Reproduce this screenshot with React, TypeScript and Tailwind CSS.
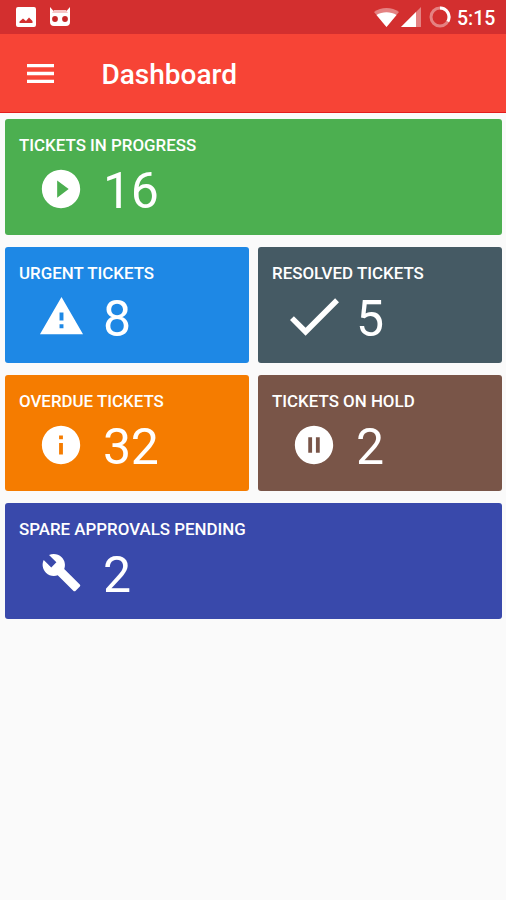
import React from 'react';
import clsx from 'clsx';
import { MdBuild, MdInfo, MdPauseCircleFilled, MdPlayCircleFilled, MdWarning } from 'react-icons/md';

interface Tile {
  label: string;
  count: number;
  icon: React.ReactNode;
  color: string;
  wide?: boolean;
}

const CheckIcon = () => (
  <svg viewBox="3.4 5.6 17.6 13.4" className="h-[38px] w-[49px] shrink-0" fill="currentColor">
    <path d="M9 16.2 4.8 12l-1.4 1.4L9 19 21 7l-1.4-1.4z" />
  </svg>
);

const TILES: Tile[] = [
  {
    label: 'TICKETS IN PROGRESS',
    count: 16,
    icon: <MdPlayCircleFilled className="size-[46px]" />,
    color: 'bg-[#4caf50]',
    wide: true,
  },
  { label: 'URGENT TICKETS', count: 8, icon: <MdWarning className="size-[47px]" />, color: 'bg-[#1e88e5]' },
  { label: 'RESOLVED TICKETS', count: 5, icon: <CheckIcon />, color: 'bg-[#455a64]' },
  { label: 'OVERDUE TICKETS', count: 32, icon: <MdInfo className="size-[46px]" />, color: 'bg-[#f57c00]' },
  {
    label: 'TICKETS ON HOLD',
    count: 2,
    icon: <MdPauseCircleFilled className="size-[46px]" />,
    color: 'bg-[#795548]',
  },
  {
    label: 'SPARE APPROVALS PENDING',
    count: 2,
    icon: <MdBuild className="size-[41px]" />,
    color: 'bg-[#3949ab]',
    wide: true,
  },
];

const StatusBar = () => (
  <div className="flex h-[34px] items-center bg-[#d32f2f] pr-[10px] pl-4">
    <svg viewBox="0 0 20 20" className="size-5" fill="#fff">
      <path
        fillRule="evenodd"
        d="M2 0h16a2 2 0 0 1 2 2v16a2 2 0 0 1-2 2H2a2 2 0 0 1-2-2V2a2 2 0 0 1 2-2zM3.5 16h13v-2L13 10.5l-3 3.500-3-2.500L3.500 14.500z"
      />
    </svg>
    <svg viewBox="0 0 22 20" className="ml-[13px] h-5 w-[22px]">
      <path fill="#fff" d="M1 0l3.500 4h13L21 0v15a4 4 0 0 1-4 4H5a4 4 0 0 1-4-4z" />
      <path fill="#f6c6c6" d="M5 3h12l2 3H3z" />
      <circle cx="6" cy="12" r="2.9" fill="#c62828" />
      <circle cx="16" cy="12" r="2.9" fill="#c62828" />
    </svg>
    <svg viewBox="0 0 25 19" className="ml-auto h-[19px] w-[25px]" fill="#fff">
      <path fillOpacity=".4" d="M0 4C7-1.3 18-1.3 25 4L12.5 19z" />
      <path d="M2.5 7C8 3.2 17 3.2 22.5 7l-10 12z" />
    </svg>
    <svg viewBox="0 0 20 20" className="ml-[2px] size-5" fill="#fff">
      <path fillOpacity=".4" d="M20 0v20H0z" />
      <path d="M15 5v15H0z" />
    </svg>
    <svg viewBox="0 0 22 22" className="ml-2 size-[22px]" fill="none" strokeWidth="3">
      <circle cx="11" cy="11" r="9" stroke="#fff" strokeOpacity=".4" />
      <path d="M11 2a9 9 0 0 1 7.8 13.5" stroke="#fff" />
    </svg>
    <span className="ml-[6px] w-[39px] pt-[3px] text-[19.5px] leading-none font-medium whitespace-nowrap">5:15</span>
  </div>
);

const StatTile: React.FC<Tile> = ({ label, count, icon, color, wide }) => (
  <div className={clsx('h-[116px] rounded-[3px] pt-4 pl-[14px]', color, wide && 'col-span-2')}>
    <h2 className="text-[16.9px] leading-5 font-medium whitespace-nowrap">{label}</h2>
    <div className="flex h-[67px] items-center">
      <div className="flex w-[84px] justify-center">{icon}</div>
      <span className="pt-[5px] text-[50px] leading-none tracking-[-0.3px]">{count}</span>
    </div>
  </div>
);

export default function App() {
  return (
    <div className="min-h-screen bg-[#fafafa] font-['Roboto',sans-serif] text-white">
      <StatusBar />
      <header className="flex h-[79px] items-center border-b border-[#e51c1c] bg-[#f74436]">
        <svg viewBox="0 0 27 19" className="ml-[26.5px] h-[19px] w-[27px]" fill="#fff">
          <path d="M0 0h27v3.3H0zM0 7.85h27v3.3H0zM0 15.7h27V19H0z" />
        </svg>
        <h1 className="ml-[48px] pt-[3px] text-[28px] leading-none font-medium">Dashboard</h1>
      </header>
      <main className="grid grid-cols-2 gap-x-[9px] gap-y-3 pt-[6px] pr-1 pl-[5px]">
        {TILES.map(tile => (
          <StatTile key={tile.label} {...tile} />
        ))}
      </main>
    </div>
  );
}
